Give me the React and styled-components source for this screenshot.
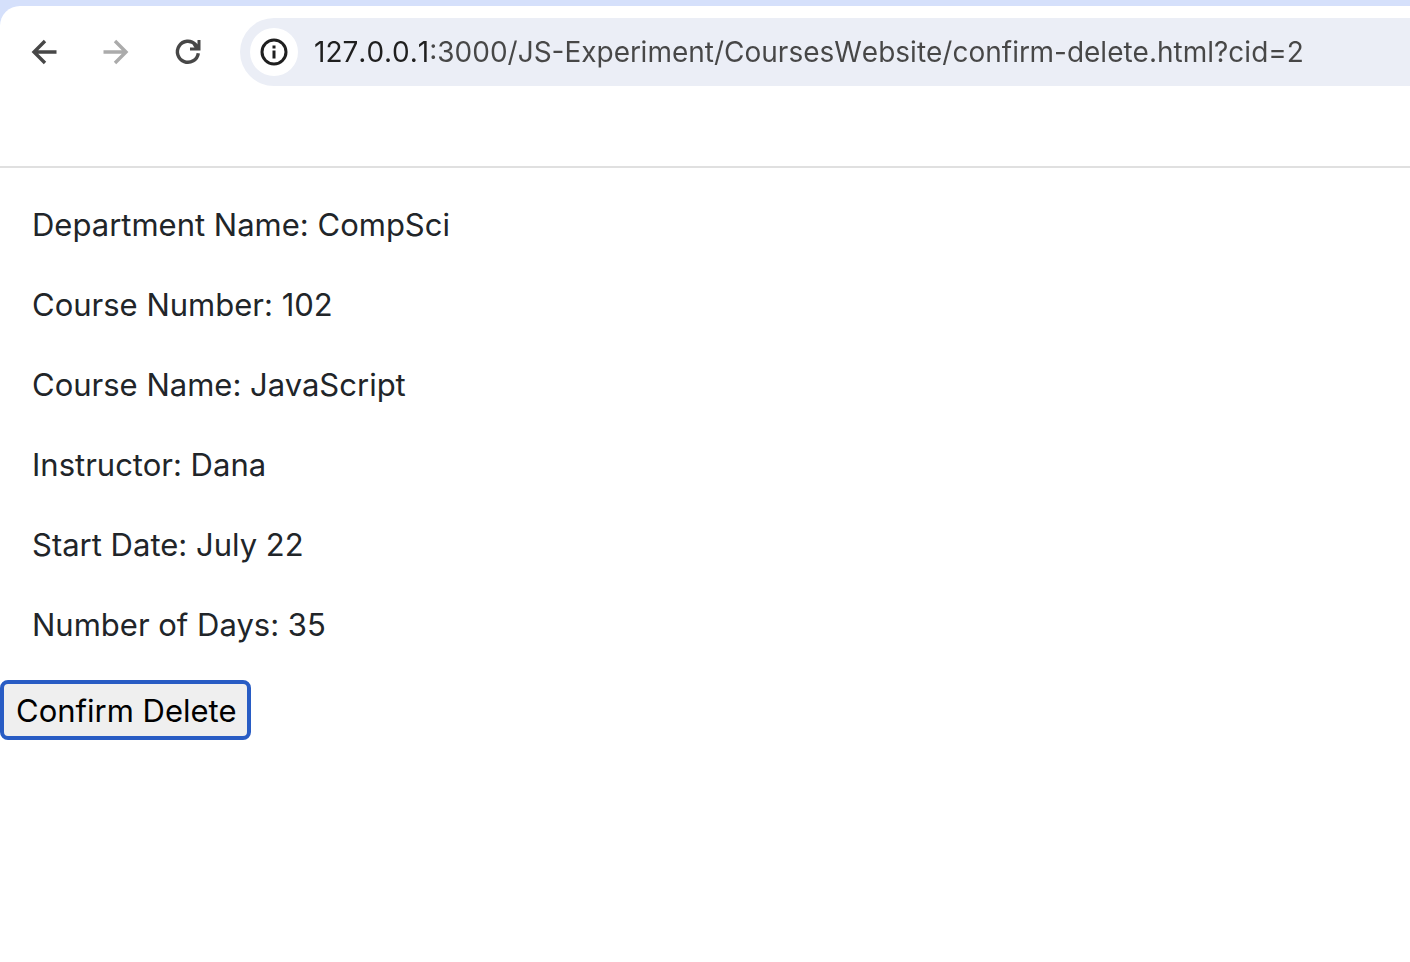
import React from "react";
import styled, { createGlobalStyle } from "styled-components";

const GlobalStyle = createGlobalStyle`
  *, *::before, *::after { box-sizing: border-box; }
  body {
    margin: 0;
    background: #ffffff;
    color: #212529;
    font-family: Inter, "Liberation Sans", sans-serif;
  }
`;

const Chrome = styled.header`
  background: #d5e0fb;
  padding-top: 6px;
`;

const Toolbar = styled.div`
  display: flex;
  align-items: flex-start;
  height: 162px;
  padding: 12px 0 0 10px;
  background: #ffffff;
  border-bottom: 2px solid #e0e0e0;
  border-top-left-radius: 20px;
`;

const NavButtons = styled.nav`
  display: flex;
  gap: 4px;
  margin-right: 18px;
`;

const IconButton = styled.button`
  display: flex;
  align-items: center;
  justify-content: center;
  width: 68px;
  height: 68px;
  padding: 0;
  border: 0;
  border-radius: 34px;
  background: none;
  color: ${(p) => (p.disabled ? "#ababab" : "#474747")};
`;

const AddressBar = styled.div`
  flex: 1;
  display: flex;
  align-items: center;
  height: 68px;
  padding-left: 10px;
  border-radius: 34px 0 0 34px;
  background: #ebeef6;
`;

const SiteInfo = styled.button`
  display: flex;
  align-items: center;
  justify-content: center;
  width: 48px;
  height: 48px;
  padding: 0;
  border: 0;
  border-radius: 24px;
  background: #ffffff;
  color: #1f1f1f;
`;

/* The host part of the address is darker than the port and path. */
const UrlInput = styled.input`
  flex: 1;
  min-width: 0;
  height: 40px;
  margin-left: 16px;
  padding: 0;
  border: 0;
  outline: 0;
  font: 400 28px/40px Inter, "Liberation Sans", sans-serif;
  font-kerning: none;
  color: #474747;
  background: linear-gradient(to right, #1f1f1f 115px, #474747 115px);
  background-clip: text;
  -webkit-background-clip: text;
  -webkit-text-fill-color: transparent;
`;

const Details = styled.section`
  padding: 16px 32px 30px;
`;

const Detail = styled.p`
  margin: 16px 0 30px;
  font-size: 31px;
  line-height: 50px;

  &:last-child { margin-bottom: 0; }
`;

const DeleteButton = styled.button`
  display: block;
  height: 60px;
  padding: 2px 10px 0 12px;
  border: 4px solid #285cc4;
  border-radius: 8px;
  background: #efefef;
  color: #000000;
  font: 400 31px/50px Inter, "Liberation Sans", sans-serif;
`;

const course = [
  ["Department Name", "CompSci"],
  ["Course Number", "102"],
  ["Course Name", "JavaScript"],
  ["Instructor", "Dana"],
  ["Start Date", "July 22"],
  ["Number of Days", "35"],
];

const Icon = ({ children }) => (
  <svg width="32" height="32" viewBox="0 0 32 32" fill="none" stroke="currentColor" strokeWidth="3" aria-hidden="true">
    {children}
  </svg>
);

export default function App() {
  return (
    <>
      <GlobalStyle />
      <Chrome>
        <Toolbar>
          <NavButtons aria-label="Browser navigation">
            <IconButton type="button" aria-label="Back">
              <Icon><path strokeWidth="3.4" d="M28.500 16H6M17 5 6 16l11 11" /></Icon>
            </IconButton>
            <IconButton type="button" aria-label="Forward" disabled>
              <Icon><path strokeWidth="3.4" d="M3.500 16H26M15 5l11 11-11 11" /></Icon>
            </IconButton>
            <IconButton type="button" aria-label="Reload">
              <Icon>
                <path strokeWidth="3.400" d="M26.300 17.200A10.500 10.500 0 1 1 23.500 8.500L26 11" />
                <path fill="currentColor" stroke="none" d="M25.500 4h3v10.500H18v-3h4.500l-1.500-2 2-2 2.500 2z" />
              </Icon>
            </IconButton>
          </NavButtons>
          <AddressBar>
            <SiteInfo type="button" aria-label="View site information">
              <Icon>
                <circle cx="16" cy="16" r="12" />
                <path d="M16 14.500v8M16 9.500v3" />
              </Icon>
            </SiteInfo>
            <UrlInput
              type="text"
              aria-label="Address"
              spellCheck={false}
              defaultValue="127.0.0.1:3000/JS-Experiment/CoursesWebsite/confirm-delete.html?cid=2"
            />
          </AddressBar>
        </Toolbar>
      </Chrome>
      <main>
        <Details>
          {course.map(([label, value]) => (
            <Detail key={label}>{label}: {value}</Detail>
          ))}
        </Details>
        <DeleteButton type="button">Confirm Delete</DeleteButton>
      </main>
    </>
  );
}
